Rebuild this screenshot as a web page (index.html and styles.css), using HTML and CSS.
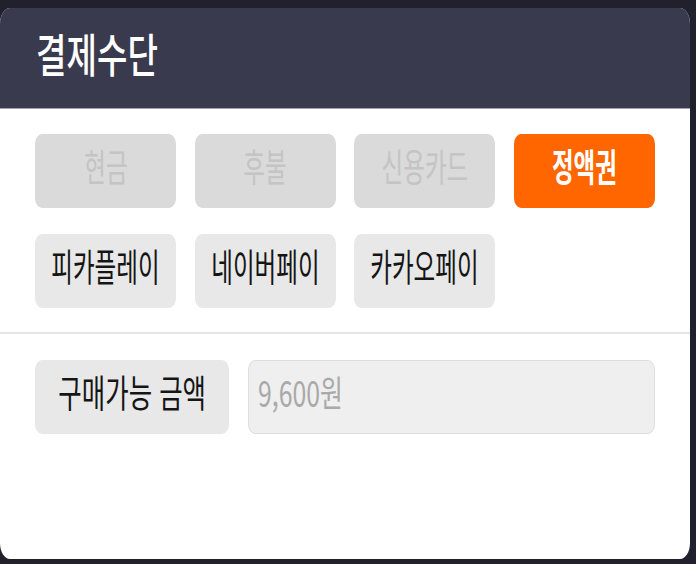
FILE: index.html
```html
<!DOCTYPE html>
<html lang="ko">

<head>
    <meta charset="UTF-8">
    <meta name="viewport" content="width=device-width, initial-scale=1.0">
    <title>결제수단</title>
    <link rel="stylesheet" href="styles.css">
</head>

<body>
    <div class="card">
        <div class="card-header">
            <h2 class="title"><span class="narrow-left">결제수단</span></h2>
        </div>

        <div class="methods">
            <button class="method disabled"><span class="narrow">현금</span></button>
            <button class="method disabled"><span class="narrow">후불</span></button>
            <button class="method disabled"><span class="narrow">신용카드</span></button>
            <button class="method active"><span class="narrow">정액권</span></button>
            <button class="method"><span class="narrow">피카플레이</span></button>
            <button class="method"><span class="narrow">네이버페이</span></button>
            <button class="method"><span class="narrow">카카오페이</span></button>
        </div>

        <div class="divider"></div>

        <div class="amount-row">
            <div class="amount-label"><span class="narrow">구매가능 금액</span></div>
            <div class="amount-field"><span class="narrow-left">9,600원</span></div>
        </div>
    </div>
</body>

</html>
```

FILE: styles.css
```css
  body {
      margin: 0;
      padding: 0;
      background-color: #21212d;
      font-family: "Noto Sans CJK KR", "Noto Sans", sans-serif;
  }

  .card {
      margin-top: 8px;
      width: 690px;
      height: 551px;
      background-color: #fff;
      border-radius: 10px / 16px;
      overflow: hidden;
  }

  .card-header {
      height: 101px;
      display: flex;
      align-items: center;
      padding-left: 36px;
      padding-bottom: 12px;
      box-sizing: border-box;
      background-color: #393a4e;
      border-bottom: 1px solid #a3a3ab;
  }

  .title {
      margin: 0;
      font-size: 46px;
      font-weight: 500;
      color: #fff;
      line-height: 1;
  }

  /* the glyphs in the design are drawn narrow */
  .narrow,
  .narrow-left {
      display: inline-block;
      white-space: nowrap;
      transform: scaleX(0.62);
  }

  .narrow-left {
      transform-origin: left center;
  }

  .title .narrow-left {
      transform: scaleX(0.72);
  }

  .methods {
      display: grid;
      grid-template-columns: repeat(4, 141px);
      grid-auto-rows: 74px;
      column-gap: 18.67px;
      row-gap: 26px;
      padding: 25px 35px 0;
  }

  .method {
      display: flex;
      align-items: center;
      justify-content: center;
      padding: 0 0 12px;
      border: none;
      border-radius: 7px / 10px;
      background-color: #e8e8e8;
      color: #151515;
      font-family: inherit;
      font-size: 38px;
      line-height: 1;
      cursor: pointer;
  }

  .method.disabled {
      background-color: #dadada;
      color: #c4c4c4;
  }

  .method.active {
      background-color: #ff6600;
      color: #fff;
      font-weight: bold;
  }

  .divider {
      height: 2px;
      margin-top: 24px;
      background-color: #e6e6e6;
  }

  .amount-row {
      display: flex;
      gap: 19px;
      padding: 26px 35px 0;
  }

  .amount-label {
      width: 194px;
      height: 74px;
      display: flex;
      align-items: center;
      justify-content: center;
      padding-bottom: 12px;
      box-sizing: border-box;
      border-radius: 7px / 10px;
      background-color: #e8e8e8;
      color: #151515;
      font-size: 38px;
      line-height: 1;
  }

  .amount-label .narrow {
      transform: scaleX(0.67);
  }

  .amount-field {
      width: 407px;
      height: 74px;
      display: flex;
      align-items: center;
      padding: 0 0 12px 9px;
      box-sizing: border-box;
      border: 1px solid #dedede;
      border-radius: 7px / 10px;
      background-color: #efefef;
      color: #a9a9a9;
      font-size: 36px;
      line-height: 1;
  }

  .amount-field .narrow-left {
      transform: scaleX(0.69);
  }
```
